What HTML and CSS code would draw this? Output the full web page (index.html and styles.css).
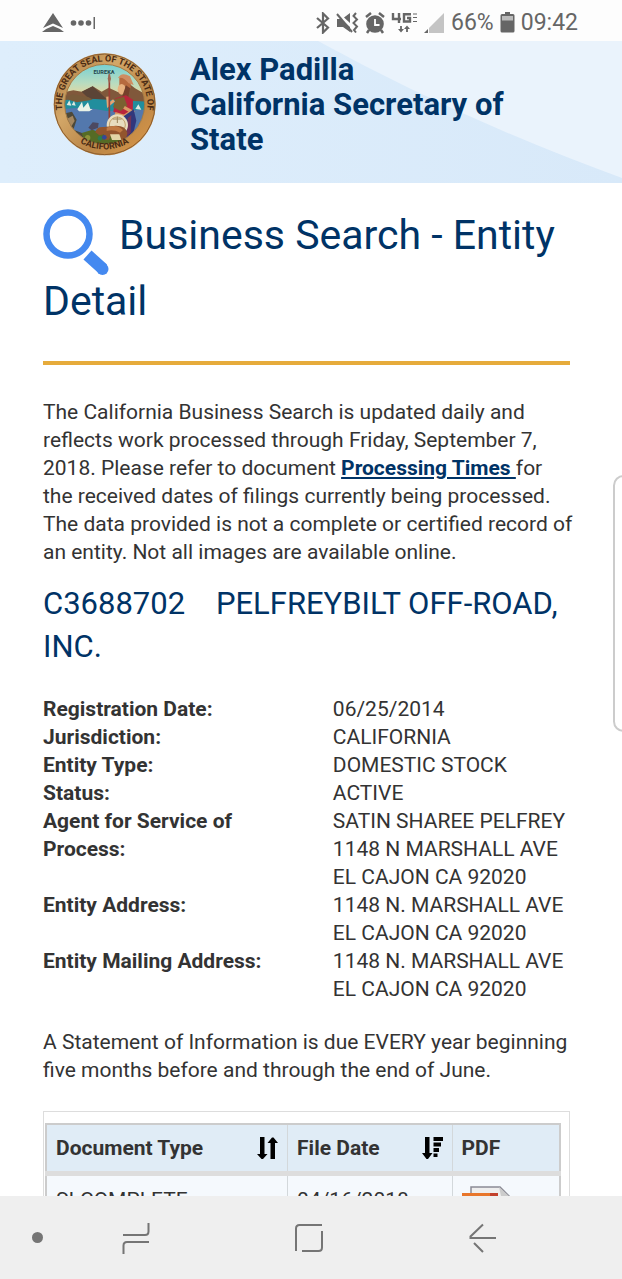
FILE: index.html
```html
<!DOCTYPE html>
<html lang="en">
<head>
<meta charset="UTF-8">
<meta name="viewport" content="width=device-width, initial-scale=1.0">
<title>Business Search - Entity Detail</title>
<link rel="stylesheet" href="styles.css">
</head>
<body>

<div class="status-bar">
    <div class="status-left">
        <svg width="22" height="20" viewBox="0 0 22 20" fill="#666">
            <path d="M11 0 L21 15 L11 10.500 L1 15 Z"/>
            <path d="M0 19 Q5 15 11 13 Q17 15 22 19 Z"/>
        </svg>
        <svg width="26" height="14" viewBox="0 0 26 14" fill="#666">
            <circle cx="3.500" cy="7" r="2.800"/>
            <circle cx="11" cy="7" r="2.800"/>
            <circle cx="18.500" cy="7" r="2.800"/>
            <rect x="23.500" y="1" width="1.500" height="12"/>
        </svg>
    </div>
    <div class="status-right">
        <svg width="14" height="22" viewBox="0 0 14 22" fill="none" stroke="#666" stroke-width="2.200">
            <path d="M1 6 L12 15.500 L7 20.500 V1.500 L12 6.500 L1 16"/>
        </svg>
        <svg width="23" height="22" viewBox="0 0 23 22" fill="#666">
            <path d="M1 7 H5 L14 15 V20 L7 15 H1 Z M8 5.500 L14 1 V11 Z"/>
            <path d="M1 2 L16 20" fill="none" stroke="#666" stroke-width="2"/>
            <path d="M20 1 L17.500 4 L21 7.500 L17.500 11 L21 14.500 L18 18 L20 20.500" fill="none" stroke="#666" stroke-width="2"/>
        </svg>
        <svg width="20" height="22" viewBox="0 0 20 22" fill="#666">
            <circle cx="10" cy="12" r="8.800"/>
            <path d="M1 5 L6 1 M19 5 L14 1 M4 18 L2 21 M16 18 L18 21" stroke="#666" stroke-width="2.500"/>
            <path d="M10 7 V13 H14.500" fill="none" stroke="#fff" stroke-width="1.800"/>
        </svg>
        <svg class="network" width="27" height="22" viewBox="0 0 27 22" fill="none" stroke="#666" stroke-width="2.400">
            <path d="M2 1 V7 H10 M8 1 V11"/>
            <path d="M20 2.200 H13 V9.500 H19 V6 H16"/>
            <path d="M22 2 H26 M22 5.500 H26 M22 9.500 H26" stroke-width="1.200"/>
            <path d="M10 14 V18 M16 20 V16" stroke-width="1.800"/>
            <path d="M7 17 H13 L10 20.500 Z M13 17 H19 L16 13.500 Z" fill="#666" stroke="none"/>
        </svg>
        <svg width="21" height="22" viewBox="0 0 21 22">
            <path d="M20 1 V21 H5 V16 Z" fill="#c4c4c4"/>
            <path d="M4 17 V21 H0 Z" fill="#666"/>
        </svg>
        <span>66%</span>
        <svg width="15" height="22" viewBox="0 0 15 22">
            <path d="M5 0 H10 V2 H13 Q14.500 2 14.500 3.500 V19 Q14.500 20.500 13 20.500 H2 Q0.500 20.500 0.500 19 V3.500 Q0.500 2 2 2 H5 Z" fill="#666"/>
            <rect x="2" y="4" width="11" height="4.500" fill="#bbb"/>
        </svg>
        <span>09:42</span>
    </div>
</div>

<div class="page">
    <header class="site-header">
        <svg class="swoosh" viewBox="0 0 622 142" preserveAspectRatio="none">
            <path d="M318 0 Q460 78 622 137 V0 Z" fill="#eaf3fc"/>
        </svg>
        <!-- state seal -->
        <svg class="seal" viewBox="39 39 312 312">
            <defs>
                <linearGradient id="gold" x1="0" y1="0" x2="1" y2="1">
                    <stop offset="0" stop-color="#a8743a"/>
                    <stop offset="0.350" stop-color="#d3a768"/>
                    <stop offset="0.650" stop-color="#b98547"/>
                    <stop offset="0.850" stop-color="#cf9147"/>
                    <stop offset="1" stop-color="#8d5a29"/>
                </linearGradient>
                <linearGradient id="sky" x1="0" y1="0" x2="0" y2="1">
                    <stop offset="0" stop-color="#6fcfd6"/>
                    <stop offset="0.250" stop-color="#b8dcc0"/>
                    <stop offset="0.400" stop-color="#ead79b"/>
                </linearGradient>
                <clipPath id="inner"><circle cx="194" cy="196" r="120"/></clipPath>
                <path id="topArc" d="M74 240 A128 128 0 1 1 314 240"/>
                <path id="bottomArc" d="M60 240 A144 144 0 0 0 328 240"/>
            </defs>
            <circle cx="194" cy="196" r="153" fill="url(#gold)"/>
            <circle cx="194" cy="196" r="151" fill="none" stroke="#8a5c2e" stroke-width="3"/>
            <g clip-path="url(#inner)">
                <rect x="70" y="70" width="250" height="250" fill="url(#sky)"/>
                <path d="M70 160 L100 154 L125 158 L158 142 L185 158 L206 146 L235 160 L262 130 L285 148 L320 168 V220 H70 Z" fill="#80583b"/>
                <path d="M125 158 L158 142 L178 160 L202 182 H150 Z" fill="#5b4436"/>
                <path d="M70 184 Q120 176 200 182 L320 188 V240 H70 Z" fill="#218e9d"/>
                <path d="M70 210 Q140 202 200 216 L320 212 V320 H70 Z" fill="#5378ad"/>
                <path d="M72 178 L98 166 L145 174 L158 182 L110 190 Z" fill="#795b3a"/>
                <path d="M70 224 L96 218 L110 242 L100 272 L142 288 L190 280 L220 320 H80 Z" fill="#4e4938"/>
                <path d="M80 240 L98 230 L104 246 L94 262 Z" fill="#a5875f"/>
                <path d="M125 282 L158 272 L190 286 L220 280 L250 310 L200 320 L132 304 Z" fill="#556b25"/>
                <path d="M145 266 L158 250 L176 252 L174 266 L155 274 Z" fill="#4c4961"/>
                <path d="M112 211 L126 188 L130 206 L144 190 L151 210 H158 L148 217 H117 Z" fill="#e9f2e7"/>
                <path d="M80 198 L88 184 L94 200 Z M95 198 L102 186 L107 200 Z M286 210 L295 196 L304 212 Z" fill="#dce8df"/>
                <!-- Minerva -->
                <path d="M238 116 Q260 104 272 126 L272 148 L255 142 L238 149 Z" fill="#b66a3e"/>
                <path d="M234 117 Q244 97 270 112 L281 138 L266 133 Q251 112 234 117 Z" fill="#cf8d62"/>
                <ellipse cx="245" cy="151" rx="12" ry="16" fill="#e7b17e"/>
                <path d="M258 139 L270 148 L263 184 L244 180 Z" fill="#75402b"/>
                <path d="M226 178 L258 169 L279 182 L278 222 L248 232 L220 218 Z" fill="#b9253c"/>
                <path d="M226 180 L252 173 L262 200 L242 216 L219 205 Z" fill="#7b6130"/>
                <path d="M222 184 L205 198 L203 173" fill="none" stroke="#e2a574" stroke-width="9"/>
                <path d="M252 205 L275 218 L252 232 L225 224" fill="none" stroke="#d99a65" stroke-width="10"/>
                <path d="M251 232 L281 211 L289 245 L276 298 L246 304 L234 260 Z" fill="#31377c"/>
                <path d="M263 238 L274 228 L272 281 L259 293 Z" fill="#713357"/>
                <path d="M208 106 L208 245" stroke="#993f34" stroke-width="5"/>
                <path d="M208 102 L203 119 L208 133 L213 119 Z" fill="#9d6751"/>
                <circle cx="232" cy="258" r="32" fill="#e8ddbf"/>
                <circle cx="232" cy="258" r="24" fill="none" stroke="#c1a06b" stroke-width="3"/>
                <path d="M218 240 L245 240 M232 233 V252" stroke="#9a8257" stroke-width="3"/>
                <!-- bear -->
                <path d="M166 280 Q170 262 192 264 L228 260 Q258 260 262 282 L258 304 H240 L232 287 L212 290 L207 302 H194 L192 286 L178 289 Z" fill="#92552d"/>
                <path d="M200 266 Q230 254 249 273 L240 281 Q220 270 200 276 Z" fill="#c07a43"/>
                <path d="M210 286 H238 L244 303 H216 Z" fill="#e2d5a6"/>
                <circle cx="180" cy="298" r="7" fill="#2a7b52"/>
                <circle cx="193" cy="295" r="7" fill="#354798"/>
                <circle cx="143" cy="296" r="8" fill="#8c913a"/>
            </g>
            <circle cx="194" cy="196" r="120" fill="none" stroke="#a67a43" stroke-width="3"/>
            <text class="seal-text"><textPath href="#topArc" startOffset="50%" text-anchor="middle">THE GREAT SEAL OF THE STATE OF</textPath></text>
            <text class="seal-text"><textPath href="#bottomArc" startOffset="50%" text-anchor="middle">CALIFORNIA</textPath></text>
            <text class="seal-motto" x="192" y="106" text-anchor="middle">EUREKA</text>
        </svg>
        <div class="site-name">Alex Padilla<br>California Secretary of State</div>
    </header>

    <main class="content">
        <h1><svg class="search-icon" width="66" height="66" viewBox="0 0 66 66">
            <circle cx="25" cy="25" r="21.500" fill="none" stroke="#4489f0" stroke-width="6.500"/>
            <path d="M44.500 46 L60 60" stroke="#4489f0" stroke-width="12" fill="none"/>
            <circle cx="59.500" cy="60" r="6" fill="#4489f0"/>
        </svg>Business Search - Entity Detail</h1>
        <hr>
        <p>The California Business Search is updated daily and reflects work processed through Friday, September 7, 2018. Please refer to document <a href="#">Processing Times </a>for the received dates of filings currently being processed. The data provided is not a complete or certified record of an entity. Not all images are available online.</p>

        <h2>C3688702 &nbsp;&nbsp; PELFREYBILT OFF-ROAD, INC.</h2>

        <dl class="details">
            <dt>Registration Date:</dt>
            <dd>06/25/2014</dd>
            <dt>Jurisdiction:</dt>
            <dd>CALIFORNIA</dd>
            <dt>Entity Type:</dt>
            <dd>DOMESTIC STOCK</dd>
            <dt>Status:</dt>
            <dd>ACTIVE</dd>
            <dt>Agent for Service of Process:</dt>
            <dd>SATIN SHAREE PELFREY<br>1148 N MARSHALL AVE<br>EL CAJON CA 92020</dd>
            <dt>Entity Address:</dt>
            <dd>1148 N. MARSHALL AVE<br>EL CAJON CA 92020</dd>
            <dt>Entity Mailing Address:</dt>
            <dd>1148 N. MARSHALL AVE<br>EL CAJON CA 92020</dd>
        </dl>

        <p>A Statement of Information is due EVERY year beginning five months before and through the end of June.</p>

        <div class="table-wrap">
            <table>
                <thead>
                    <tr>
                        <th class="col-type"><div class="th-inner">Document Type
                            <button type="button" aria-label="Sort by document type">
                                <svg width="21" height="22" viewBox="0 0 21 22">
                                    <path d="M3 0 H7.500 V17 H10.500 L6 22 H4.500 L0 17 H3 Z M13.500 22 V6 H10.500 L15 0.500 H16.500 L21 6 H18 V22 Z"/>
                                </svg>
                            </button>
                        </div></th>
                        <th class="col-date"><div class="th-inner">File Date
                            <button type="button" aria-label="Sort by file date">
                                <svg width="21" height="22" viewBox="0 0 21 22">
                                    <path d="M3 0 H7.500 V16 H10.500 L6 22 H4.500 L0 16 H3 Z M11.500 0 H21 V4 H11.500 Z M11.500 5.500 H19 V9.500 H11.500 Z M11.500 11 H17 V15 H11.500 Z M11.500 16.500 H15.500 V20 H11.500 Z"/>
                                </svg>
                            </button>
                        </div></th>
                        <th>PDF</th>
                    </tr>
                </thead>
                <tbody>
                    <tr>
                        <td>SI-COMPLETE</td>
                        <td>04/16/2018</td>
                        <td><a href="#" aria-label="Open PDF"><svg class="pdf-icon" width="50" height="44" viewBox="0 0 50 44">
                            <path d="M9 1 H38 L48 11 V43 H9 Z" fill="#eee" stroke="#8b8b95" stroke-width="1.500"/>
                            <path d="M37 1 L39 10 L48 11 Z" fill="#ccc"/>
                            <rect x="0" y="7" width="36" height="18" fill="#e8762b"/>
                            <rect x="28" y="7" width="8" height="18" fill="#c2402c"/>
                        </svg></a></td>
                    </tr>
                </tbody>
            </table>
        </div>
    </main>
</div>

<div class="edge-handle"></div>

<nav class="nav-bar">
    <span class="nav-dot"></span>
    <button type="button" aria-label="Recents">
        <svg width="28" height="32" viewBox="0 0 28 32">
            <path d="M1 13 H23 Q26.500 13 26.500 9.500 V1 M27 20 H5 Q1.500 20 1.500 23.500 V32"/>
        </svg>
    </button>
    <button type="button" aria-label="Home">
        <svg width="28" height="28" viewBox="0 0 28 28">
            <path d="M1 27 V4.500 Q1 1 4.500 1 H27 M27 7 V23.500 Q27 27 23.500 27 H7"/>
        </svg>
    </button>
    <button type="button" aria-label="Back">
        <svg width="28" height="30" viewBox="0 0 28 30">
            <path d="M14 1.500 L1.500 13.500 V15 H27 M5 20 L14 29"/>
        </svg>
    </button>
</nav>

</body>
</html>
```

FILE: styles.css
```css
* {
    box-sizing: border-box;
}
body {
    margin: 0;
    height: 100vh;
    display: flex;
    flex-direction: column;
    font-family: Roboto, "Liberation Sans", sans-serif;
    font-size: 21px;
    line-height: 28px;
    color: #333;
    background-color: #fff;
}
button {
    padding: 0;
    border: none;
    background: none;
    cursor: pointer;
}
svg {
    display: block;
    flex-shrink: 0;
}

/* phone status bar */
.status-bar {
    display: flex;
    justify-content: space-between;
    align-items: center;
    height: 41px;
    flex-shrink: 0;
    padding: 4px 44px 0 42px;
    background-color: #fdfdfd;
    color: #666;
    font-size: 23px;
}
.status-left, .status-right {
    display: flex;
    align-items: center;
    gap: 6px;
}

/* page */
.page {
    flex: 1;
    min-height: 0;
    overflow: hidden;
}
.site-header {
    position: relative;
    display: flex;
    gap: 33px;
    height: 142px;
    padding: 11px 53px;
    background: linear-gradient(to right, #deeefc, #d8e9f9);
}
.swoosh {
    position: absolute;
    top: 0;
    left: 0;
    width: 100%;
    height: 100%;
}
.seal {
    position: relative;
    width: 104px;
    height: 104px;
}
.seal-text {
    font-size: 27px;
    font-weight: bold;
    fill: #4a2b14;
}
.seal-motto {
    font-size: 17px;
    font-weight: bold;
    fill: #24444c;
}
.site-name {
    position: relative;
    font-size: 31px;
    font-weight: bold;
    line-height: 35px;
    color: #003366;
}
.content {
    padding: 18px 52px 0 43px;
}
h1, h2 {
    margin: 0;
    font-weight: normal;
    color: #003366;
}
h1 {
    font-size: 41px;
    line-height: 52px;
}
.search-icon {
    display: inline-block;
    vertical-align: middle;
    margin-top: 8px;
    margin-right: 10px;
}
h2 {
    font-size: 31px;
    line-height: 43px;
}
hr {
    height: 4px;
    margin: 34px 0 33px;
    border: none;
    background-color: #e6ab3b;
}
p {
    margin: 0 -6px 16px 0;
}
p a {
    color: #003366;
    font-weight: bold;
}
.details {
    display: grid;
    grid-template-columns: 55% 45%;
    margin: 27px 0 25px;
}
dt {
    font-weight: bold;
    padding-right: 60px;
}
dd {
    margin: 0;
    white-space: nowrap;
}

/* documents table */
.table-wrap {
    margin-top: 27px;
    padding: 11px 8px 0 1px;
    border: 1px solid #ddd;
}
table {
    width: 100%;
    table-layout: fixed;
    border-collapse: collapse;
    border: 2px solid #ccc;
}
th, td {
    padding: 9px;
    border-right: 1px solid #d3d8db;
    text-align: left;
    vertical-align: top;
}
th {
    background-color: #e0ecf6;
    border-bottom: 5px solid #ddd;
}
td {
    padding-top: 10px;
    background-color: #f5f9fd;
}
.col-type {
    width: 47%;
}
.col-date {
    width: 32%;
}
.th-inner {
    display: flex;
    justify-content: space-between;
    align-items: center;
}

/* Samsung edge panel handle */
.edge-handle {
    position: fixed;
    top: 475px;
    right: -12px;
    width: 21px;
    height: 257px;
    border: 2px solid #ccc;
    border-radius: 11px;
    background-color: #fff;
}

/* bottom navigation */
.nav-bar {
    display: grid;
    grid-template-columns: 49px repeat(3, 1fr);
    align-items: center;
    justify-items: center;
    height: 83px;
    flex-shrink: 0;
    padding-right: 52px;
    background-color: #efefef;
}
.nav-bar svg {
    fill: none;
    stroke: #757575;
    stroke-width: 2;
}
.nav-dot {
    justify-self: end;
    width: 11px;
    height: 11px;
    margin-right: 6px;
    border-radius: 50%;
    background-color: #757575;
}
```
